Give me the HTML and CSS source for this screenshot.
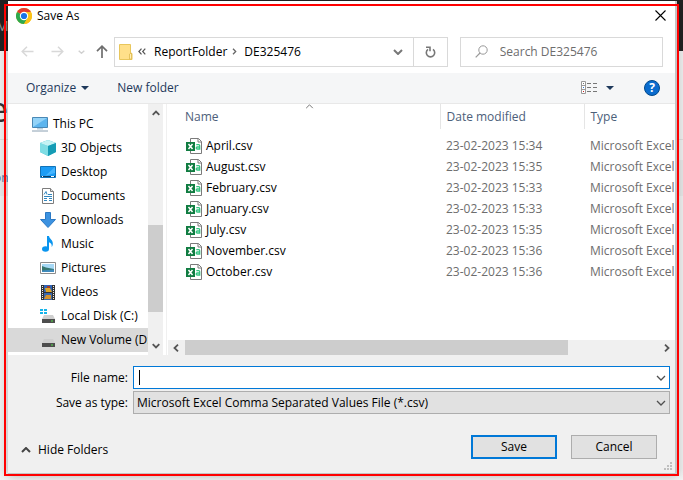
FILE: index.html
```html
<!DOCTYPE html>
<html lang="en">
<head>
<meta charset="utf-8">
<title>Save As</title>
<link rel="stylesheet" href="styles.css">
</head>
<body>
<svg class="defs" width="0" height="0" aria-hidden="true">
  <symbol id="csv" viewBox="0 0 16 16">
    <path d="M4.500 .5h8l3 3v12h-11z" fill="#fff" stroke="#7b7b7b"/>
    <path d="M12 .5V4h3.500" fill="none" stroke="#7b7b7b"/>
    <path d="M0 4h9v9H0z" fill="#107c41"/>
    <path d="M2.500 6l4 5M6.500 6l-4 5" stroke="#fff" stroke-width="1.500"/>
    <path d="M10.300 6.700h2.500q.9 0 .9 1V11h-2.400q-1.100 0-1.100-1t1.100-1h2.200" fill="none" stroke="#33c481" stroke-width="1.300"/>
  </symbol>
  <symbol id="chevron" viewBox="0 0 10 6"><path d="M1 1l4 4 4-4" fill="none" stroke="currentColor" stroke-width="1.300"/></symbol>
  <symbol id="drive" viewBox="0 0 16 16">
    <path d="M4 7h9l2 4H2z" fill="#cfcfcf"/>
    <path d="M2 11h13v4H2z" fill="#4d4d4d"/><path d="M11 12.500h2v1h-2z" fill="#53e04a"/>
  </symbol>
</svg>

<div class="backdrop" aria-hidden="true">
  <div class="topbar">M</div>
  <div class="heading">e</div>
  <div class="band">on</div>
</div>

<main class="dialog">
  <header class="titlebar">
    <svg width="16" height="16" viewBox="0 0 16 16">
      <circle cx="8" cy="8" r="8" fill="#fbc116"/>
      <path d="M8 8L1.070 4A8 8 0 0 1 14.930 4z" fill="#e33b2e"/>
      <path d="M8 8L1.070 4A8 8 0 0 0 8 16l3.500-6z" fill="#2da94f"/>
      <path d="M8 4h6.930A8 8 0 0 1 8 16l3.500-6z" fill="#fbc116"/>
      <circle cx="8" cy="8" r="4.200" fill="#fff"/><circle cx="8" cy="8" r="3.100" fill="#1a73e8"/>
    </svg>
    <h1>Save As</h1>
    <button class="plain close" aria-label="Close"><svg width="11" height="11" viewBox="0 0 11 11"><path d="M.5.5l10 10M10.500.5l-10 10" stroke="#000" stroke-width="1.100"/></svg></button>
  </header>

  <nav class="navbar">
    <button class="plain back" aria-label="Back"><svg width="13" height="11" viewBox="0 0 13 11"><path d="M6 .7L1.200 5.500 6 10.300M1.500 5.500H12.500" fill="none" stroke="#d8d8d8" stroke-width="1.500"/></svg></button>
    <button class="plain forward" aria-label="Forward"><svg width="13" height="11" viewBox="0 0 13 11"><path d="M7 .7l4.800 4.800L7 10.300M11.500 5.500H.5" fill="none" stroke="#d8d8d8" stroke-width="1.500"/></svg></button>
    <button class="plain recent" aria-label="Recent locations"><svg width="7" height="4" viewBox="0 0 7 4"><path d="M.7.7l2.800 2.500L6.300.7" fill="none" stroke="#d0d0d0" stroke-width="1.400"/></svg></button>
    <button class="plain up" aria-label="Up"><svg width="12" height="13" viewBox="0 0 12 13"><path d="M1 6.200l5-5 5 5M6 1.500V13" fill="none" stroke="#6e6e6e" stroke-width="1.700"/></svg></button>
    <div class="address">
      <svg width="14" height="16" viewBox="0 0 14 16"><path d="M.5.5h11v9h1.500v6H.5z" fill="#ffe08a" stroke="#e8c65c"/><path d="M10.500 15V10l2-1v6z" fill="#fff0b5" stroke="#dfb94c" stroke-width=".8"/></svg>
      <svg class="more" width="8" height="7" viewBox="0 0 8 7"><path d="M3.500.7L.9 3.500l2.600 2.800M7.300.7L4.700 3.500l2.600 2.800" fill="none" stroke="#555" stroke-width="1.200"/></svg>
      <a href="#">ReportFolder</a>
      <svg class="sep" width="5" height="7" viewBox="0 0 5 7"><path d="M1 .7l2.700 2.800L1 6.300" fill="none" stroke="#666" stroke-width="1.300"/></svg>
      <a href="#">DE325476</a>
      <button class="plain previous" aria-label="Previous locations"><svg width="10" height="6" viewBox="0 0 10 6"><path d="M1 1l4 4 4-4" fill="none" stroke="#777" stroke-width="2"/></svg></button>
      <button class="plain refresh" aria-label="Refresh"><svg width="11" height="12" viewBox="0 0 11 12"><path d="M8 3.300A4.200 4.200 0 1 1 3 3.300M1 1.300h4v4" fill="none" stroke="#777" stroke-width="1.600"/></svg></button>
    </div>
    <label class="search">
      <svg width="13" height="13" viewBox="0 0 13 13"><circle cx="8" cy="5" r="4.200" fill="none" stroke="#999"/><path d="M5 8L.7 12.300" stroke="#999" stroke-width="1.200"/></svg>
      <input type="search" placeholder="Search DE325476" aria-label="Search DE325476">
    </label>
  </nav>

  <div class="toolbar">
    <button class="plain">Organize <svg width="8" height="4" viewBox="0 0 8 4"><path d="M0 0h8L4 4z" fill="#1e395b"/></svg></button>
    <button class="plain">New folder</button>
    <button class="plain view" aria-label="Change your view">
      <svg width="17" height="14" viewBox="0 0 17 14"><path d="M.5.5h4v12h-4zM.5 4.500h4M.5 8.500h4" fill="#fff" stroke="#999"/><path d="M6 2.500h4m2 0h4M6 6.500h4m2 0h4M6 10.500h4m2 0h4" stroke="#777"/><path d="M2 2h1v1H2z" fill="#777"/><path d="M2 6h1v1H2z" fill="#3478d8"/><path d="M2 10h1v1H2z" fill="#c22"/></svg>
      <svg width="8" height="4" viewBox="0 0 8 4"><path d="M0 0h8L4 4z" fill="#1e395b"/></svg>
    </button>
    <button class="help" aria-label="Help">?</button>
  </div>

  <section class="browser">
    <div class="tree">
      <ul>
        <li class="root"><svg width="16" height="16" viewBox="0 0 16 16"><path d="M.5 1.500h15v10H.5z" fill="#5db5ee" stroke="#4a88b5"/><path d="M1 2h14L1 11z" fill="#93d3f8"/><path d="M5 12h6v1.500H5z" fill="#b9cfdd"/><path d="M0 15h16" stroke="#8aa0b2"/></svg>This PC</li>
        <li><svg width="16" height="16" viewBox="0 0 16 16"><path d="M8 0l8 3v9l-8 4-8-4V3z" fill="#37bdd0"/><path d="M0 3l8 3v10l-8-4z" fill="#7fdde4"/><path d="M8 0l8 3-8 3-8-3z" fill="#c5f3f4"/><path d="M8 6l8-3v9l-8 4z" fill="#159cb5"/></svg>3D Objects</li>
        <li><svg width="16" height="16" viewBox="0 0 16 16"><path d="M.5 2.500h15v11H.5z" fill="#1b9cf5" stroke="#1173b8"/><path d="M15 3v6L5 12z" fill="#45b5ff"/><path d="M1 12.500h14" stroke="#0b3e66"/><path d="M2 12.500h1m8 0h3" stroke="#fff"/></svg>Desktop</li>
        <li><svg width="16" height="16" viewBox="0 0 16 16"><path d="M2.500.5h8l3 3v12h-11z" fill="#fff" stroke="#7d7d7d"/><path d="M10.500.5v3h3" fill="#ddd" stroke="#7d7d7d"/><path d="M4 6.500l2-3 1 3M4 8.500h8M8 6.500h4M4 10.500h3m2 0h3M4 12.500h3m2 0h3" fill="none" stroke="#3287bf"/></svg>Documents</li>
        <li><svg width="16" height="16" viewBox="0 0 16 16"><path d="M5.500.5h5v7h5L8 15.500.5 7.500h5z" fill="#3c92e0" stroke="#2a78c4"/></svg>Downloads</li>
        <li><svg width="16" height="16" viewBox="0 0 16 16"><ellipse cx="5.500" cy="13" rx="3.500" ry="2.700" fill="#0a95ef"/><path d="M7 0h2c.3 3 4.500 4 3.800 8.500-.3 1.500-.8 2-1.300 2.500C12.300 8.500 11 7 9 6.300V13H7z" fill="#0a95ef"/></svg>Music</li>
        <li><svg width="16" height="16" viewBox="0 0 16 16"><path d="M.5 2.500h15v11H.5z" fill="#fff" stroke="#8c8c8c"/><path d="M2 4h12v8H2z" fill="#a6d8f5"/><path d="M2 6l4 1.500 8 1.500v3H2z" fill="#37776f"/><path d="M2 10.500l12-1V12H2z" fill="#3f8bbd"/></svg>Pictures</li>
        <li><svg width="16" height="16" viewBox="0 0 16 16"><path d="M1 1h14v15H1z" fill="#333"/><path d="M4 1h8v7H4z" fill="#2f62b4"/><path d="M4 9h8v7H4z" fill="#3a69ae"/><path d="M5 4h5l2 4H6z" fill="#e0a626"/><path d="M6 11h5v4H4z" fill="#d8932b"/><path d="M2.500 2v14M13.500 2v14" stroke="#eee" stroke-dasharray="1 1"/><path d="M7 2h3v2H7z" fill="#a33a2a"/></svg>Videos</li>
        <li><svg width="16" height="16" viewBox="0 0 16 16"><use href="#drive"/><path d="M0 1h3v2H0zM4 1h3v2H4zM0 4h3v2H0zM4 4h3v2H4z" fill="#16b4ea"/></svg>Local Disk (C:)</li>
        <li class="selected"><svg width="16" height="16"><use href="#drive"/></svg>New Volume (D:)</li>
      </ul>
      <div class="vscroll" aria-hidden="true">
        <svg class="flip" width="8" height="6" viewBox="0 0 8 6"><path d="M.7 1.200L4 4.500l3.300-3.300" fill="none" stroke="#555" stroke-width="1.800"/></svg>
        <div class="vtrack"><div class="vthumb"></div></div>
        <svg width="8" height="6" viewBox="0 0 8 6"><path d="M.7 1.200L4 4.500l3.300-3.300" fill="none" stroke="#555" stroke-width="1.800"/></svg>
      </div>
    </div>

    <div class="files">
      <svg class="sort" width="9" height="5" viewBox="0 0 10 6"><path d="M1 5l4-4 4 4" fill="none" stroke="#777" stroke-width="1.200"/></svg>
      <table>
        <thead><tr><th class="name">Name</th><th class="date">Date modified</th><th class="type">Type</th></tr></thead>
        <tbody>
          <tr><td><svg width="16" height="16"><use href="#csv"/></svg>April.csv</td><td>23-02-2023 15:34</td><td>Microsoft Excel</td></tr>
          <tr><td><svg width="16" height="16"><use href="#csv"/></svg>August.csv</td><td>23-02-2023 15:35</td><td>Microsoft Excel</td></tr>
          <tr><td><svg width="16" height="16"><use href="#csv"/></svg>February.csv</td><td>23-02-2023 15:33</td><td>Microsoft Excel</td></tr>
          <tr><td><svg width="16" height="16"><use href="#csv"/></svg>January.csv</td><td>23-02-2023 15:33</td><td>Microsoft Excel</td></tr>
          <tr><td><svg width="16" height="16"><use href="#csv"/></svg>July.csv</td><td>23-02-2023 15:35</td><td>Microsoft Excel</td></tr>
          <tr><td><svg width="16" height="16"><use href="#csv"/></svg>November.csv</td><td>23-02-2023 15:36</td><td>Microsoft Excel</td></tr>
          <tr><td><svg width="16" height="16"><use href="#csv"/></svg>October.csv</td><td>23-02-2023 15:36</td><td>Microsoft Excel</td></tr>
        </tbody>
      </table>
      <div class="hscroll" aria-hidden="true">
        <svg width="6" height="8" viewBox="0 0 6 8"><path d="M5 .7L1.500 4 5 7.300" fill="none" stroke="#555" stroke-width="1.800"/></svg>
        <div class="htrack"><div class="hthumb"></div></div>
        <svg width="6" height="8" viewBox="0 0 6 8"><path d="M1 .7L4.500 4 1 7.300" fill="none" stroke="#555" stroke-width="1.800"/></svg>
      </div>
    </div>
  </section>

  <form class="fields">
    <label for="filename">File name:</label>
    <div class="combo active"><span class="caret"></span><input id="filename" type="text"><svg width="10" height="6"><use href="#chevron"/></svg></div>
    <label for="filetype">Save as type:</label>
    <div class="combo"><select id="filetype"><option>Microsoft Excel Comma Separated Values File (*.csv)</option></select><svg width="10" height="6"><use href="#chevron"/></svg></div>
  </form>

  <footer class="actions">
    <button class="plain hide"><svg class="flip" width="10" height="6" viewBox="0 0 10 6"><path d="M1 1l4 4 4-4" fill="none" stroke="#444" stroke-width="2"/></svg>Hide Folders</button>
    <button class="push primary">Save</button>
    <button class="push">Cancel</button>
  </footer>
  <svg class="grip" width="8" height="8" viewBox="0 0 8 8"><path d="M6 0h2v2H6zM3 3h2v2H3zM6 3h2v2H6zM0 6h2v2H0zM3 6h2v2H3zM6 6h2v2H6z" fill="#bfbfbf"/></svg>
</main>
<div class="outline" aria-hidden="true"></div>
</body>
</html>
```
FILE: styles.css
```css
* { box-sizing: border-box; }

body {
  margin: 0;
  min-height: 100vh;
  padding: 1px 6px 6px 8px;
  display: flex;
  position: relative;
  overflow: hidden;
  background: #f0f0f0;
  font: 12px/16px "Segoe UI", "Open Sans", sans-serif;
  color: #000;
}

.defs { position: absolute; }
svg { flex: none; display: block; }

button, input, select { font: inherit; color: inherit; }
.plain { border: 0; background: none; padding: 0; display: flex; align-items: center; }
a { color: inherit; text-decoration: none; }

/* Page behind the dialog */
.backdrop { position: absolute; inset: 0; background: linear-gradient(#eee 0 470px, #f4f4f4 480px); }
.topbar { height: 51px; padding-top: 18px; background: #222; color: #999; font-size: 14px; text-indent: -4px; }
.heading { height: 89px; padding-top: 50px; border-bottom: 1px solid #ddd; font-size: 34px; color: #333; text-indent: -11px; }
.band { height: 36px; margin-top: 20px; padding-top: 10px; background: #e6e6e6; color: #4a78a8; text-indent: -6px; }

.dialog {
  position: relative;
  flex: 1;
  min-width: 0;
  display: flex;
  flex-direction: column;
  background: #f0f0f0;
  border-right: 2px solid #c4c4c4;
  border-bottom: 1px solid #c4c4c4;
  box-shadow: 0 2px 10px rgba(0, 0, 0, .25);
}

.outline { position: absolute; inset: 4px; border: 2px solid #f00; pointer-events: none; }

.titlebar { display: flex; align-items: center; height: 29px; padding: 0 9px 0 8px; background: #fff; }
.titlebar h1 { margin: 0 0 0 5px; font-size: 12px; font-weight: 400; }
.close { margin-left: auto; }

.navbar { display: flex; align-items: center; height: 43px; padding: 0 12px 0 13px; background: #fff; }
.forward { margin-left: 17px; }
.recent { margin-left: 14px; }
.up { margin-left: 11px; }
.address {
  display: flex;
  align-items: center;
  flex: 7;
  height: 30px;
  margin-left: 6px;
  padding-left: 4px;
  border: 1px solid #d9d9d9;
}
.more { margin: 0 8px 0 5px; }
.sep { margin: 0 7px 0 5px; }
.previous { margin: 0 10px 0 auto; }
.refresh { align-self: stretch; width: 34px; justify-content: center; border-left: 1px solid #d9d9d9; }
.search {
  display: flex;
  align-items: center;
  flex: 4;
  min-width: 0;
  height: 30px;
  margin-left: 12px;
  padding-left: 14px;
  border: 1px solid #d9d9d9;
}
.search input { flex: 1; min-width: 0; margin-left: 12px; padding: 0; border: 0; outline: 0; background: none; }
.search input::placeholder { color: #6d6d6d; opacity: 1; }

.toolbar {
  display: flex;
  align-items: center;
  gap: 28px;
  height: 31px;
  padding: 0 15px 0 18px;
  background: #f5f6f7;
  border-bottom: 1px solid #e8e8e8;
  color: #1e395b;
}
.toolbar .plain { gap: 5px; }
.toolbar .view { gap: 8px; margin-left: auto; }
.help {
  width: 16px;
  height: 16px;
  margin-left: 2px;
  padding: 0;
  border: 1px solid #00498c;
  border-radius: 50%;
  background: #0a6cce;
  color: #fff;
  font-weight: 700;
  line-height: 14px;
}

.browser { display: flex; flex: 1; background: #fff; }

.tree { display: flex; width: 159px; flex: none; border-right: 1px solid #f0f0f0; }
.tree ul { flex: 1; min-width: 0; margin: 0; padding: 8px 0 0; list-style: none; }
.tree li {
  display: flex;
  align-items: center;
  gap: 5px;
  height: 24px;
  padding-left: 32px;
  white-space: nowrap;
  overflow: hidden;
}
.tree .root { padding-left: 24px; }
.tree .selected { background: #d9d9d9; }

.vscroll {
  display: flex;
  flex-direction: column;
  align-items: center;
  width: 15px;
  margin-right: 3px;
  padding: 6px 0;
  background: #f0f0f0;
}
.vtrack { flex: 1; width: 100%; padding: 109px 0 31px; display: flex; }
.vthumb { flex: 1; background: #cdcdcd; }
.flip { transform: scaleY(-1); }

.files { position: relative; display: flex; flex-direction: column; flex: 1; min-width: 0; padding-left: 1px; }
.sort { position: absolute; top: 0; left: 50%; margin-left: -116px; }
table { width: 100%; table-layout: fixed; border-collapse: collapse; }
th { height: 25px; padding: 0 0 0 6px; text-align: left; font-weight: 400; color: #4c607a; border-right: 1px solid #e5e5e5; }
th:last-child { border-right: 0; }
th.name { padding-left: 17px; }
.date { width: 144px; }
.type { width: 91px; }
tbody::before { content: ""; display: block; height: 6px; }
td { height: 21px; padding: 0 0 0 6px; white-space: nowrap; overflow: hidden; color: #6d6d6d; }
td:first-child { padding-left: 18px; color: #000; }
td svg { display: inline-block; vertical-align: -4px; margin-right: 4px; }

.hscroll {
  display: flex;
  align-items: center;
  height: 15px;
  margin-top: auto;
  padding: 0 5px;
  background: #f0f0f0;
}
.htrack { flex: 1; align-self: stretch; padding-left: 6px; display: flex; }
.hthumb { width: 80%; background: #cdcdcd; }

.fields {
  display: grid;
  grid-template-columns: 120px 1fr;
  column-gap: 5px;
  row-gap: 2px;
  align-items: center;
  padding: 11px 5px 0 0;
}
.fields label { text-align: right; }
.combo { display: flex; align-items: center; height: 23px; padding: 0 3px; background: #e1e1e1; border: 1px solid #adadad; color: #505050; }
.combo.active { background: #fff; border-color: #0078d7; }
.combo input, .combo select { flex: 1; min-width: 0; padding: 0; border: 0; outline: 0; background: none; appearance: none; color: #000; }
.caret { width: 1px; height: 15px; margin-left: 2px; background: #000; }

.actions { display: flex; align-items: center; gap: 14px; padding: 21px 18px 14px 13px; }
.hide { margin-right: auto; padding-top: 6px; gap: 7px; }
.push { width: 86px; height: 24px; padding: 0; border: 1px solid #adadad; background: #e1e1e1; }
.push.primary { border: 2px solid #0078d7; }
.grip { position: absolute; right: 3px; bottom: 3px; }
```
